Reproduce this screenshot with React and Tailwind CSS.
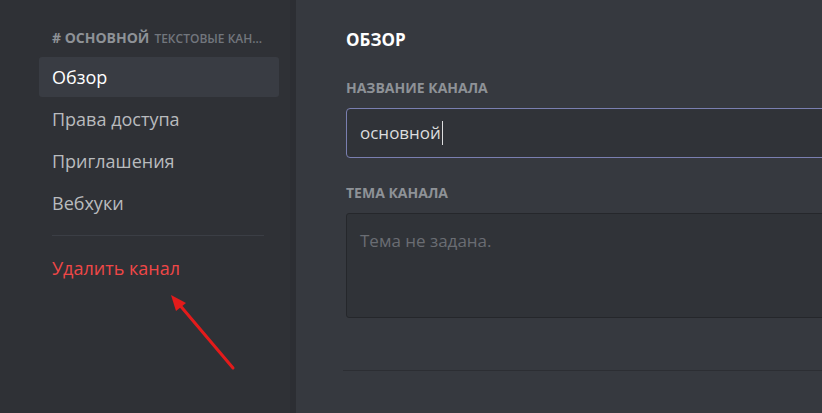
export default function App() {
  const items = ["Обзор", "Права доступа", "Приглашения", "Вебхуки"];
  return (
    <div
      className="relative flex h-[413px] w-[822px] overflow-hidden bg-[#36393f]"
      style={{ fontFamily: '"Open Sans", "Noto Sans", sans-serif' }}
    >
      <aside className="flex w-[296px] shrink-0 flex-col bg-[#2f3136] pt-[29px] pl-[39px] border-r-[6px] border-[#2c2e33]">
        <div className="flex w-[228px] items-baseline gap-[5px] pl-[13px] pb-[9px] leading-[18px]">
          <span className="shrink-0 text-[14px] font-bold uppercase text-[#8e9297]"># основной</span>
          <span className="truncate text-[12px] font-semibold uppercase text-[#72767d]">текстовые каналы</span>
        </div>
        {items.map((item, i) => (
          <div
            key={item}
            className={`mb-[2px] flex h-[40px] w-[240px] items-center rounded-[3px] pl-[13px] text-[18px] ${
              i === 0 ? "bg-[#393c43] text-white" : "text-[#b9bbbe]"
            }`}
          >
            {item}
          </div>
        ))}
        <div className="ml-[13px] mt-[10px] h-px w-[212px] bg-[#3b3e45]" />
        <div className="mt-[12px] flex h-[40px] w-[240px] items-center pl-[13px] text-[18px] text-[#f04747]">
          Удалить канал
        </div>
      </aside>

      <main className="flex flex-col pl-[50px] pt-[28px]">
        <h2 className="text-[17px] font-bold uppercase leading-[24px] text-white">Обзор</h2>
        <label className="mt-[28px] text-[14px] font-bold uppercase leading-[16px] text-[#8e9297]">
          Название канала
        </label>
        <div className="mt-[12px] flex h-[50px] w-[560px] items-center rounded-[4px] border border-[#7a7fb0] bg-[#303338] pl-[13px] text-[17px] text-[#dcddde]">
          основной
          <span className="ml-px h-[24px] w-px bg-[#dcddde]" />
        </div>
        <label className="mt-[27px] text-[14px] font-bold uppercase leading-[16px] text-[#8e9297]">
          Тема канала
        </label>
        <div className="mt-[12px] h-[105px] w-[560px] rounded-[3px] border border-[#25272b] bg-[#303338] pl-[13px] pt-[14px] text-[17px] text-[#6a6d73]">
          Тема не задана.
        </div>
        <div className="mt-[52px] -ml-[3px] h-px w-[560px] bg-[#2c2e33]" />
      </main>

      <svg className="absolute left-0 top-0" width="822" height="413" viewBox="0 0 822 413">
        <line x1="233" y1="368" x2="178" y2="303" stroke="#e31b1b" strokeWidth="3" strokeLinecap="round" />
        <polygon points="171,295 186,303 176,311" fill="#e31b1b" />
      </svg>
    </div>
  );
}
